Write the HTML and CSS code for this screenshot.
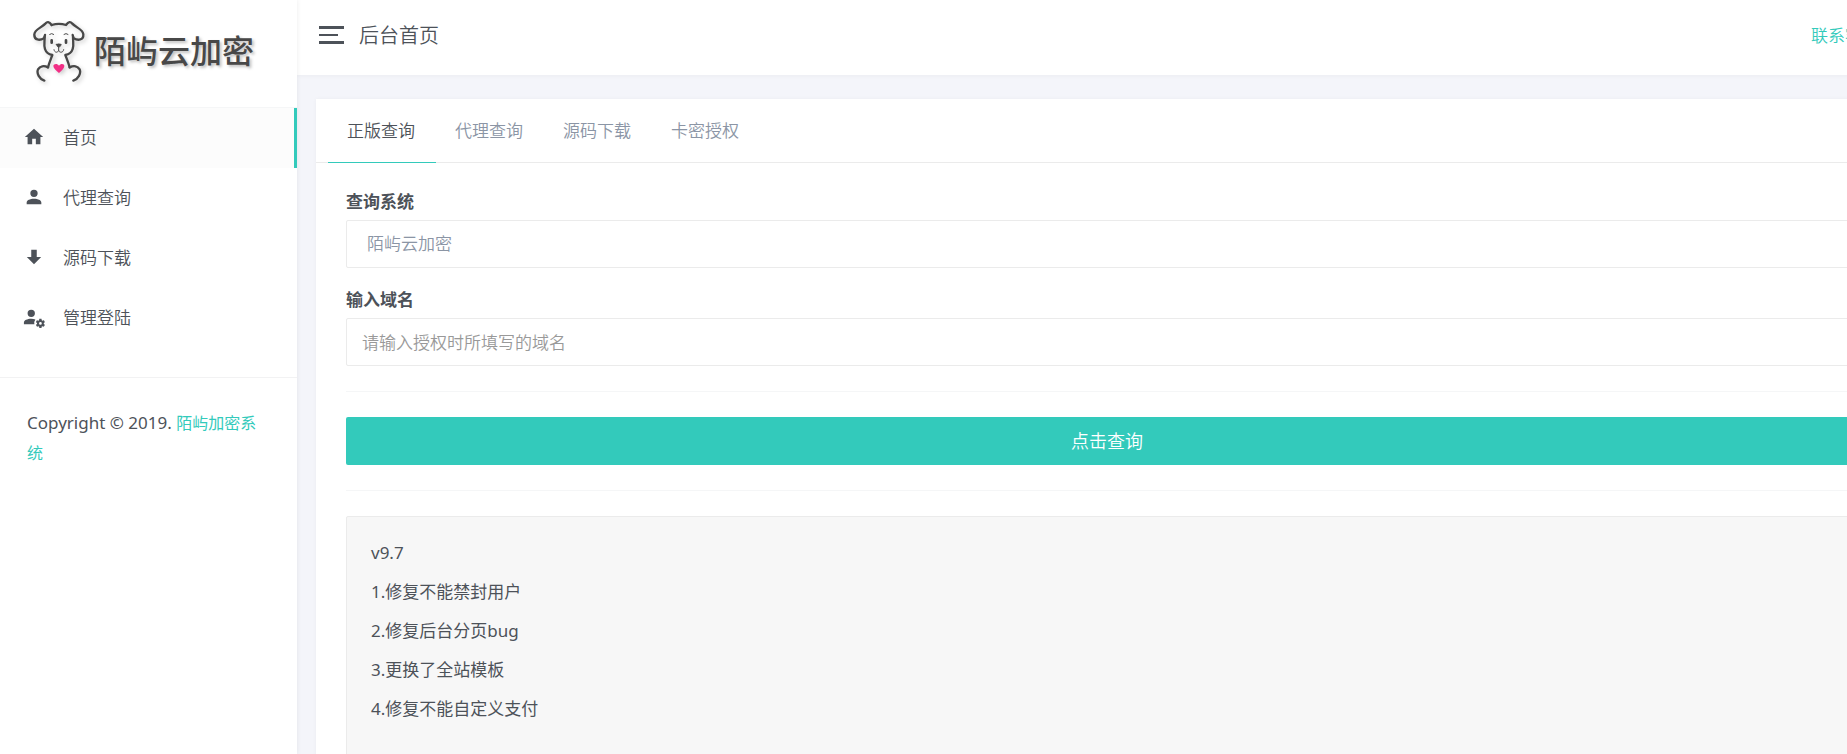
FILE: index.html
```html
<!DOCTYPE html>
<html lang="zh-CN">
  <head>
    <meta charset="UTF-8" />
    <meta name="viewport" content="width=device-width, initial-scale=1.0" />
    <title>后台首页</title>
    <link rel="stylesheet" href="styles.css">
  </head>

  <body>
    <div class="layout">
      <aside class="sidebar">
        <a class="logo" href="#">
          <svg class="logo-dog" viewBox="96 60 162 186" fill="none" stroke="#484848" stroke-width="7" stroke-linecap="round" stroke-linejoin="round">
            <path d="M155 75C147 64 141 65 137 70C124 84 104 88 103 103C102 121 119 122 132 115C133 113 134 109 135 105" />
            <path d="M155 75C168 71 186 71 198 75C206 64 212 65 216 70C229 84 249 88 250 103C251 121 234 122 221 115C220 113 219 109 218 105" />
            <path d="M134 110C134 125 131 136 135 147C138 157 145 163 157 165C153 176 148 187 144 202" />
            <path d="M219 110C219 125 222 136 218 147C215 157 208 163 196 165C200 176 205 187 209 202" />
            <path d="M144 202C132 196 120 198 114 208C109 220 118 237 133 242" />
            <path d="M209 202C221 196 233 198 239 208C244 220 235 237 220 242" />
            <path d="M149 103Q155 98 161 103M192 103Q198 98 204 103M162 149C163 159 174 159 176 151C178 159 190 159 191 149M176 140V151" stroke-width="3" />
            <path d="M155 121V128M198 121V128" stroke-width="8" />
            <path d="M169 133Q176 130 184 133Q182 141 176 142Q170 140 169 133Z" fill="#484848" stroke-width="2" />
            <path d="M177 219C169 212 160 205 160 198C161 191 172 190 177 197C182 190 193 191 193 198C193 205 185 212 177 219Z" fill="#f22f86" stroke="none" />
          </svg>
          <span class="logo-text">陌屿云加密</span>
        </a>

        <nav class="menu">
          <a class="menu-item active" href="#">
            <svg class="icon" viewBox="0 0 24 24"><path d="M10 20V14H14V20H19V12H22L12 3L2 12H5V20H10Z" /></svg>
            首页
          </a>
          <a class="menu-item" href="#">
            <svg class="icon" viewBox="0 0 24 24"><path d="M12 4A4 4 0 0 1 16 8A4 4 0 0 1 12 12A4 4 0 0 1 8 8A4 4 0 0 1 12 4M12 14C16.42 14 20 15.79 20 18V20H4V18C4 15.79 7.58 14 12 14Z" /></svg>
            代理查询
          </a>
          <a class="menu-item" href="#">
            <svg class="icon" viewBox="0 0 24 24"><path d="M9 4H15V12H19.84L12 19.84L4.16 12H9V4Z" /></svg>
            源码下载
          </a>
          <a class="menu-item" href="#">
            <svg class="icon" viewBox="0 0 24 24">
              <path d="M9 4A4 4 0 0 1 13 8A4 4 0 0 1 9 12A4 4 0 0 1 5 8A4 4 0 0 1 9 4M9 14C10.7 14 12.2 14.3 13.5 14.7A6.5 6.5 0 0 0 12.4 20H1V18C1 15.79 4.58 14 9 14Z" />
              <path transform="translate(1 2)" d="M17 12C16.87 12 16.76 12.09 16.74 12.21L16.55 13.53C16.25 13.66 15.96 13.82 15.7 14L14.46 13.5C14.35 13.5 14.22 13.5 14.15 13.63L13.15 15.36C13.09 15.47 13.11 15.6 13.21 15.68L14.27 16.5V17.5L13.21 18.32C13.12 18.4 13.09 18.53 13.15 18.64L14.15 20.37C14.21 20.5 14.34 20.5 14.46 20.5L15.7 20C15.96 20.18 16.24 20.35 16.55 20.47L16.74 21.79C16.76 21.91 16.86 22 17 22H19C19.11 22 19.22 21.91 19.24 21.79L19.43 20.47C19.73 20.34 20 20.18 20.27 20L21.5 20.5C21.63 20.5 21.76 20.5 21.83 20.37L22.83 18.64C22.89 18.53 22.86 18.4 22.77 18.32L21.7 17.5V16.5L22.76 15.68C22.85 15.6 22.88 15.47 22.82 15.36L21.82 13.63C21.76 13.5 21.63 13.5 21.5 13.5L20.27 14C20 13.82 19.73 13.65 19.42 13.53L19.23 12.21C19.22 12.09 19.11 12 19 12H17M18 15.5A1.5 1.5 0 0 1 18 18.5A1.5 1.5 0 0 1 18 15.5Z" fill-rule="evenodd" />
            </svg>
            管理登陆
          </a>
        </nav>

        <p class="copyright">Copyright © 2019. <a href="#">陌屿加密系统</a></p>
      </aside>

      <div class="main">
        <header class="topbar">
          <button type="button" class="toggler" aria-label="菜单">
            <span class="bar"></span>
            <span class="bar bar-short"></span>
            <span class="bar"></span>
          </button>
          <h1 class="page-title">后台首页</h1>
          <a class="contact" href="#">联系客服</a>
        </header>

        <main class="card">
          <nav class="tabs">
            <a class="tab active" href="#">正版查询</a>
            <a class="tab" href="#">代理查询</a>
            <a class="tab" href="#">源码下载</a>
            <a class="tab" href="#">卡密授权</a>
          </nav>

          <div class="card-body">
            <form>
              <label for="system">查询系统</label>
              <select id="system" class="form-control" name="system">
                <option>陌屿云加密</option>
              </select>

              <label for="domain">输入域名</label>
              <input type="text" id="domain" class="form-control" name="domain" placeholder="请输入授权时所填写的域名" />

              <hr />
              <button type="submit" class="btn">点击查询</button>
              <hr />
            </form>

            <div class="well">
              <p>v9.7</p>
              <p>1.修复不能禁封用户</p>
              <p>2.修复后台分页bug</p>
              <p>3.更换了全站模板</p>
              <p>4.修复不能自定义支付</p>
            </div>
          </div>
        </main>
      </div>
    </div>
  </body>
</html>
```
FILE: styles.css
```css
* {
  box-sizing: border-box;
}

body {
  margin: 0;
  font-family: "Noto Sans", "Noto Sans CJK SC", sans-serif;
  font-size: 17px;
  font-weight: 350;
  line-height: 26px;
  color: #4d5259;
  background-color: #f4f5fa;
}

a {
  color: #33cabb;
  text-decoration: none;
}

.layout {
  display: flex;
  height: 100vh;
  overflow: hidden;
}

/* sidebar */
.sidebar {
  flex: 0 0 297px;
  background-color: #fff;
  box-shadow: 0 0 5px rgba(0, 0, 0, 0.08);
  z-index: 2;
}

.logo {
  display: flex;
  align-items: center;
  gap: 8px;
  padding: 20px 32px 25px;
  border-bottom: 1px solid #f5f6f7;
}

.logo-dog {
  width: 54px;
  height: 62px;
  filter: drop-shadow(2px 2px 2px rgba(0, 0, 0, 0.2));
}

.logo-text {
  font-size: 32px;
  font-weight: 500;
  line-height: 32px;
  color: #484848;
  white-space: nowrap;
  text-shadow: 2px 2px 3px rgba(0, 0, 0, 0.25);
}

.menu {
  padding-bottom: 29px;
  border-bottom: 1px solid #f2f2f3;
}

.menu-item {
  display: flex;
  align-items: center;
  gap: 18px;
  height: 60px;
  padding-left: 23px;
  color: #4d5259;
}

.menu-item.active {
  background-color: #fcfcfc;
  border-right: 3px solid #33cabb;
}

.icon {
  width: 22px;
  height: 22px;
  margin-bottom: 2px;
  fill: #4d5259;
  overflow: visible;
}

.copyright {
  margin: 0;
  padding: 30px 30px 30px 27px;
  font-size: 17px;
  font-weight: 400;
  line-height: 30px;
}

.copyright a {
  font-size: 16px;
}

/* the content area runs on past the right edge of the window */
.main {
  flex: 1 0 auto;
  width: calc(100% - 297px + 70px);
}

.topbar {
  display: flex;
  align-items: center;
  height: 75px;
  padding: 0 38px 15px 22px;
  background-color: #fff;
  box-shadow: 0 1px 4px rgba(0, 0, 0, 0.04);
}

.toggler {
  display: flex;
  flex-direction: column;
  gap: 5px;
  padding: 10px 0 0;
  border: none;
  background: none;
  cursor: pointer;
}

.bar {
  width: 25px;
  height: 3px;
  background-color: #4d5259;
}

.bar-short {
  width: 19px;
  height: 2px;
}

.page-title {
  margin: 0;
  padding: 12px 0 0 15px;
  font-size: 20px;
  font-weight: 350;
}

.contact {
  margin-left: auto;
  padding-top: 12px;
}

/* card */
.card {
  margin: 24px 19px;
  background-color: #fff;
  box-shadow: 0 0 4px rgba(0, 0, 0, 0.04);
}

.tabs {
  display: flex;
  padding: 0 12px;
  border-bottom: 1px solid #ebebeb;
}

.tab {
  height: 64px;
  margin-bottom: -1px;
  padding: 19px 21px 19px 19px;
  color: #8b95a5;
}

.tab.active {
  color: #4d5259;
  border-bottom: 1px solid #33cabb;
}

.card-body {
  padding: 26px 30px;
}

label {
  display: block;
  margin-bottom: 5px;
  font-weight: 700;
}

.form-control {
  display: block;
  width: 100%;
  height: 48px;
  margin-bottom: 19px;
  padding: 0 15px;
  border: 1px solid #ebebeb;
  border-radius: 2px;
  font: inherit;
  color: #8b95a5;
  background-color: #fff;
  appearance: none;
  outline: none;
}

select.form-control {
  padding: 0 20px;
}

.form-control::placeholder {
  color: #999;
}

hr {
  margin: 25px 0;
  border: none;
  border-top: 1px solid #f5f6f7;
}

.btn {
  display: block;
  width: 100%;
  height: 48px;
  padding: 0;
  border: none;
  border-radius: 2px;
  font: inherit;
  font-size: 18px;
  color: #fff;
  background-color: #33cabb;
  cursor: pointer;
}

.btn:hover {
  background-color: #52d3c7;
}

.well {
  min-height: 300px;
  padding: 22px 24px;
  border: 1px solid #ebebeb;
  border-radius: 2px;
  font-weight: 400;
  background-color: #f7f7f7;
}

.well p {
  margin: 0 0 12px;
  line-height: 27px;
}
```
